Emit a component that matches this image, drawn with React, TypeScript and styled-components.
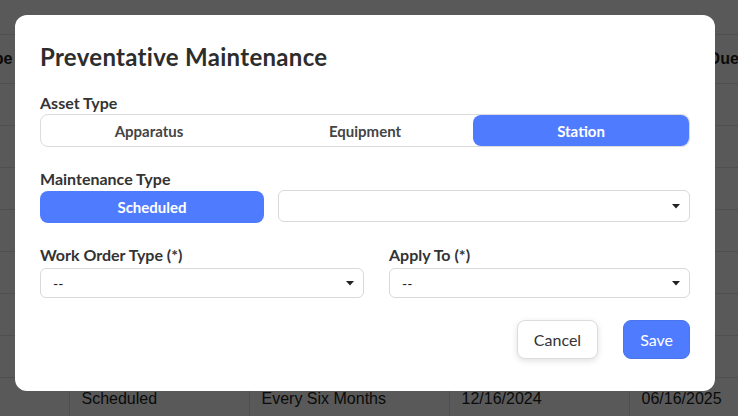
import React, { FC } from "react";
import styled, { createGlobalStyle } from "styled-components";

const GlobalStyle = createGlobalStyle`
  html, body {
    margin: 0;
    padding: 0;
    background: #fff;
    overflow: hidden;
  }
  body {
    font-family: "Liberation Sans", Arial, sans-serif;
  }
`;

const BLUE = "#4f7cff";

type Row = {
  asset: string;
  type: string;
  freq: string;
  last: string;
  next: string;
};

const rows: Row[] = [
  { asset: "Station 1", type: "Scheduled", freq: "Monthly", last: "01/02/2025", next: "" },
  { asset: "Station 2", type: "Scheduled", freq: "Yearly", last: "03/11/2024", next: "" },
  { asset: "Station 3", type: "Scheduled", freq: "Quarterly", last: "10/05/2024", next: "" },
  { asset: "Station 4", type: "Scheduled", freq: "Monthly", last: "11/20/2024", next: "" },
  { asset: "Station 5", type: "Scheduled", freq: "Every Six Months", last: "08/14/2024", next: "" },
  { asset: "Station 6", type: "Scheduled", freq: "Yearly", last: "06/01/2024", next: "" },
  { asset: "Station 7", type: "Scheduled", freq: "Quarterly", last: "09/30/2024", next: "" },
  { asset: "Station 8", type: "Scheduled", freq: "Every Six Months", last: "12/16/2024", next: "06/16/2025" },
];

const columns = [
  { title: "Work Order Type", width: 197 },
  { title: "Maintenance Type", width: 180 },
  { title: "Frequency", width: 200 },
  { title: "Last Completed", width: 180 },
  { title: "Next PM Due", width: 200 },
];

const Caret: FC = () => (
  <svg width="8" height="5" viewBox="0 0 8 5">
    <path d="M0 0 L8 0 L4 4.5 Z" fill="#222" />
  </svg>
);

type SelectProps = { value?: string; height: number };
const Select: FC<SelectProps> = ({ value, height }) => (
  <SelectBox $h={height}>
    <span>{value}</span>
    <Caret />
  </SelectBox>
);

const App: FC = (): JSX.Element => {
  return (
    <>
      <GlobalStyle />
      <Page>
        <Table>
          <colgroup>
            {columns.map((c) => (
              <col key={c.title} style={{ width: c.width }} />
            ))}
          </colgroup>
          <thead>
            <tr>
              {columns.map((c) => (
                <Th key={c.title}>{c.title}</Th>
              ))}
            </tr>
          </thead>
          <tbody>
            {rows.map((r, i) => (
              <tr key={i}>
                <Td>{r.asset}</Td>
                <Td>{r.type}</Td>
                <Td>{r.freq}</Td>
                <Td>{r.last}</Td>
                <Td>{r.next}</Td>
              </tr>
            ))}
          </tbody>
        </Table>
      </Page>

      <Overlay>
        <Modal>
          <Title>Preventative Maintenance</Title>

          <Field $gap={22}>
            <Label>Asset Type</Label>
            <Segmented>
              <Segment>Apparatus</Segment>
              <Segment>Equipment</Segment>
              <Segment $active>Station</Segment>
            </Segmented>
          </Field>

          <Field $gap={22}>
            <Label>Maintenance Type</Label>
            <TypeRow>
              <PillButton>Scheduled</PillButton>
              <Select height={32} />
            </TypeRow>
          </Field>

          <TwoCol>
            <Field $gap={0}>
              <Label $space={3}>Work Order Type (*)</Label>
              <Select value="--" height={30} />
            </Field>
            <Field $gap={0}>
              <Label $space={3}>Apply To (*)</Label>
              <Select value="--" height={30} />
            </Field>
          </TwoCol>

          <Footer>
            <Button type="button">Cancel</Button>
            <Button type="button" $primary>
              Save
            </Button>
          </Footer>
        </Modal>
      </Overlay>
    </>
  );
};

export default App;

const Page = styled.div`
  width: 738px;
  height: 416px;
  overflow: hidden;
  padding-top: 34px;
  box-sizing: border-box;
`;

const Table = styled.table`
  width: 957px;
  border-collapse: collapse;
  margin-left: -128px;
  table-layout: fixed;
  color: #222;
  font-size: 16px;
`;

const Th = styled.th`
  height: 49px;
  padding: 0 12px;
  box-sizing: border-box;
  text-align: left;
  font-weight: 700;
  white-space: nowrap;
  overflow: hidden;
  border-top: 1px solid #dee2e6;
  border-bottom: 1px solid #dee2e6;
`;

const Td = styled.td`
  height: 42px;
  padding: 0 12px;
  box-sizing: border-box;
  white-space: nowrap;
  border-bottom: 1px solid #dee2e6;
  border-left: 1px solid #dee2e6;
  &:first-child {
    border-left: none;
    color: transparent;
  }
`;

const Overlay = styled.div`
  position: fixed;
  inset: 0;
  background: rgba(0, 0, 0, 0.65);
  display: flex;
  align-items: flex-start;
  padding: 15px 0 0 15px;
`;

const Modal = styled.div`
  width: 700px;
  height: 376px;
  box-sizing: border-box;
  background: #fff;
  border-radius: 12px;
  padding: 27px 25px 0 25px;
  display: flex;
  flex-direction: column;
  font-family: Lato, "Noto Sans", sans-serif;
  color: #333;
`;

const Title = styled.h2`
  margin: 0 0 21px 0;
  font-size: 24px;
  letter-spacing: 0.3px;
  line-height: 30px;
  font-weight: 700;
  color: #2d2d2d;
`;

const Field = styled.div<{ $gap: number }>`
  display: flex;
  flex-direction: column;
  margin-bottom: ${(p) => p.$gap}px;
`;

const Label = styled.label<{ $space?: number }>`
  font-size: 16px;
  line-height: 20px;
  font-weight: 700;
  color: #333;
  margin-bottom: ${(p) => p.$space ?? 1}px;
`;

const Segmented = styled.div`
  display: flex;
  height: 33px;
  box-sizing: border-box;
  border: 1px solid #dcdcdc;
  border-radius: 8px;
`;

const Segment = styled.div<{ $active?: boolean }>`
  flex: 1;
  display: flex;
  align-items: center;
  justify-content: center;
  font-size: 15px;
  font-weight: 700;
  border-radius: 8px;
  color: ${(p) => (p.$active ? "#fff" : "#444")};
  background: ${(p) => (p.$active ? BLUE : "transparent")};
`;

const TypeRow = styled.div`
  display: grid;
  grid-template-columns: 224px 1fr;
  gap: 14px;
  align-items: start;
`;

const PillButton = styled.div`
  height: 32px;
  margin-top: 1px;
  border-radius: 8px;
  background: ${BLUE};
  color: #fff;
  font-size: 15px;
  font-weight: 700;
  display: flex;
  align-items: center;
  justify-content: center;
`;

const SelectBox = styled.div<{ $h: number }>`
  height: ${(p) => p.$h}px;
  box-sizing: border-box;
  border: 1px solid #d9d9d9;
  border-radius: 6px;
  display: flex;
  align-items: center;
  justify-content: space-between;
  padding: 0 9px 0 12px;
  font-size: 14px;
  color: #222;
`;

const TwoCol = styled.div`
  display: grid;
  grid-template-columns: 324px 1fr;
  gap: 25px;
`;

const Footer = styled.div`
  display: flex;
  justify-content: flex-end;
  gap: 25px;
  margin-top: 22px;
`;

const Button = styled.button<{ $primary?: boolean }>`
  height: 39px;
  padding: 0 16px;
  border-radius: 8px;
  font-family: Lato, "Noto Sans", sans-serif;
  font-size: 16px;
  cursor: pointer;
  border: 1px solid ${(p) => (p.$primary ? "#4a74ec" : "#dcdcdc")};
  background: ${(p) => (p.$primary ? BLUE : "#fff")};
  color: ${(p) => (p.$primary ? "#fff" : "#333")};
  box-shadow: ${(p) => (p.$primary ? "none" : "0 2px 6px rgba(0,0,0,0.12)")};
`;
